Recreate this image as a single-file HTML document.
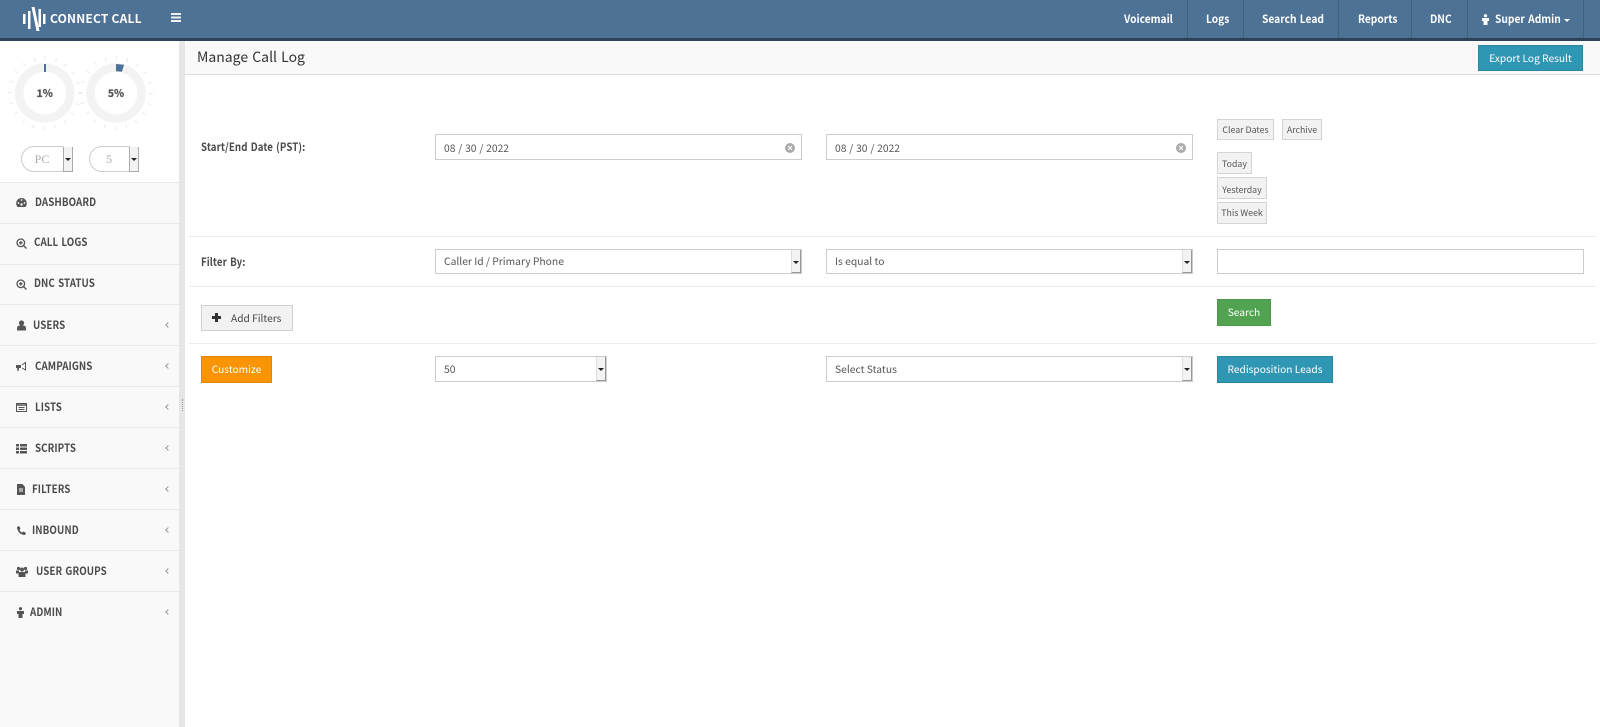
<!DOCTYPE html>
<html><head><meta charset="utf-8"><title>Manage Call Log</title>
<style>
*{box-sizing:border-box}
html,body{margin:0;padding:0;width:1600px;height:727px;overflow:hidden;background:#fff;font-family:"Noto Sans CJK SC","Liberation Sans",sans-serif;color:#444;font-size:11px}
.a{position:absolute;white-space:nowrap}
.hdr{left:0;top:0;width:1600px;height:41px;background:#4d7296;border-bottom:3px solid #2b4257}
.sep{top:0;width:1px;height:38px;background:#3f607f}
.nav{top:12px;color:#fff;font-weight:bold;font-size:11px;line-height:14px;word-spacing:1px;transform:scaleX(.93);transform-origin:0 0}
.side{left:0;top:41px;width:179px;height:686px;background:#fff}
.menu{left:0;top:182px;width:179px;height:545px;background:#f9f9f9;border-top:1px solid #e8e8e8}
.split{left:179px;top:41px;width:6px;height:686px;background:#e6e6e6}
.div{left:0;width:179px;height:1px;background:#e9e9e9}
.mi{font-weight:bold;font-size:11px;line-height:14px;color:#4a4a4a;letter-spacing:.1px;word-spacing:1px;transform:scaleX(.885);transform-origin:0 0}
.chev{left:166px;width:4px;height:4px;border-left:1px solid #999;border-bottom:1px solid #999;transform:rotate(45deg)}
.ico{left:16px;width:11px;height:11px}
.tb{left:185px;top:41px;width:1415px;height:34px;background:#f9f9f9;border-bottom:1px solid #ddd}
.ln{left:189px;width:1407px;height:1px;background:#ececec}
.lbl{font-weight:bold;font-size:11px;line-height:14px;color:#4a4a4a;letter-spacing:.1px;word-spacing:1px;transform:scaleX(.88);transform-origin:0 0}
.inp{border:1px solid #ccc;background:#fff;color:#555;font-size:10.300px;line-height:24px;padding-left:8px}
.ar{right:0;top:0;bottom:0;width:10px;background:#f3f3f3;border-left:1px solid #ddd;border-right:1px solid #999;border-bottom:1px solid #999}
.ar:after{content:"";position:absolute;left:1px;top:11px;border:3px solid transparent;border-top:3px solid #222;border-bottom:0;width:0;height:0}
.sb{background:#f2f2f2;border:1px solid #d4d4d4;color:#555;font-size:8.800px;line-height:20px;text-align:center}
.btn{color:#fff;font-size:10.200px;text-align:center}
.x{width:10px;height:10px;border-radius:50%;background:#aaa}
.x:after{content:"×";position:absolute;left:0;top:0;width:10px;text-align:center;color:#fff;font:bold 9px/10px "Liberation Sans",sans-serif}
.pill{border:1px solid #ccc;border-radius:14px;height:26px;background:#fff;font-family:"Liberation Serif",serif;font-size:12px;color:#aaa;line-height:24px;text-align:center}
.pa{top:147px;width:10px;height:25px;background:#f3f3f3;border:1px solid #aaa;border-top:0}
.pa:after{content:"";position:absolute;left:1px;top:11px;border:3px solid transparent;border-top:3px solid #222;border-bottom:0;width:0;height:0}
</style></head><body>
<div class="a hdr"></div>
<svg class="a" style="left:23px;top:7px" width="23" height="25" viewBox="0 0 23 25" fill="#fff"><rect x="0" y="7" width="2.500" height="10"/><rect x="5" y="4" width="2.500" height="18"/><path d="M8.500 0h3l5 24h-3z"/><rect x="15.500" y="2" width="2.500" height="18"/><rect x="20" y="7" width="2.500" height="10"/></svg>
<div class="a" style="left:50px;top:11px;color:#fff;font-weight:bold;font-size:12px;line-height:16px;letter-spacing:.2px">CONNECT CALL</div>
<svg class="a" style="left:171px;top:13px" width="10" height="9" fill="#f0f0f0"><rect width="10" height="2"/><rect y="3.500" width="10" height="2"/><rect y="7" width="10" height="2"/></svg>
<div class="a sep" style="left:1187px"></div><div class="a sep" style="left:1243px"></div><div class="a sep" style="left:1338px"></div><div class="a sep" style="left:1411px"></div><div class="a sep" style="left:1467px"></div><div class="a sep" style="left:1583px"></div>
<div class="a nav" style="left:1124px">Voicemail</div>
<div class="a nav" style="left:1206px">Logs</div>
<div class="a nav" style="left:1262px">Search Lead</div>
<div class="a nav" style="left:1358px">Reports</div>
<div class="a nav" style="left:1430px">DNC</div>
<svg class="a" style="left:1481px;top:14px" width="9" height="11" fill="#fff"><circle cx="4.500" cy="1.700" r="1.600"/><path d="M1 4h7v3H6.500v4h-4V7H1z"/></svg>
<div class="a nav" style="left:1495px">Super Admin</div>
<div class="a" style="left:1564px;top:19px;border:3px solid transparent;border-top:3px solid #fff;border-bottom:0"></div>

<div class="a side"></div>
<svg class="a" style="left:5px;top:55px" width="150" height="80">
<circle cx="39.700" cy="38" r="25.500" fill="none" stroke="#f3f3f3" stroke-width="8.500"/>
<circle cx="111" cy="38" r="25.500" fill="none" stroke="#f3f3f3" stroke-width="8.500"/>
<circle cx="39.700" cy="38" r="35" fill="none" stroke="#ececec" stroke-width="4" pathLength="240" stroke-dasharray="1.200 10.800"/>
<circle cx="111" cy="38" r="35" fill="none" stroke="#ececec" stroke-width="4" pathLength="240" stroke-dasharray="1.200 10.800"/>
<rect x="39" y="9" width="2" height="8" fill="#4d7296"/>
<path d="M111 9l8 .8-2 7-6-.5z" fill="#4d7296"/>
<text x="39.700" y="42" text-anchor="middle" font-family="Noto Sans CJK SC" font-weight="bold" font-size="10.500" fill="#555" stroke="#555" stroke-width=".25">1%</text>
<text x="111" y="42" text-anchor="middle" font-family="Noto Sans CJK SC" font-weight="bold" font-size="10.500" fill="#555" stroke="#555" stroke-width=".25">5%</text>
</svg>
<div class="a pill" style="left:21px;top:146px;width:52px;padding-right:10px">PC</div><div class="a pa" style="left:63px"></div>
<div class="a pill" style="left:89px;top:146px;width:50px;padding-right:10px">5</div><div class="a pa" style="left:129px"></div>

<div class="a menu"></div>
<div class="a div" style="top:223px"></div><div class="a div" style="top:264px"></div><div class="a div" style="top:304px"></div><div class="a div" style="top:345px"></div><div class="a div" style="top:386px"></div><div class="a div" style="top:427px"></div><div class="a div" style="top:468px"></div><div class="a div" style="top:509px"></div><div class="a div" style="top:550px"></div><div class="a div" style="top:591px"></div>
<div class="a split"></div>
<div class="a" style="left:182px;top:399px;width:1px;height:12px;border-left:1px dotted #999"></div>

<svg class="a ico" style="top:197px" viewBox="0 0 11 11" fill="#555"><path d="M5.500 1a5.300 5.300 0 0 0-5.300 5.300c0 1.500.5 2.700 1.300 3.700h8c.8-1 1.300-2.200 1.300-3.700A5.300 5.300 0 0 0 5.500 1z"/><circle cx="5.500" cy="3" r=".9" fill="#f9f9f9"/><circle cx="2.500" cy="6" r=".9" fill="#f9f9f9"/><circle cx="8.500" cy="6" r=".9" fill="#f9f9f9"/><circle cx="5.500" cy="7.500" r="1.200" fill="#f9f9f9"/></svg>
<div class="a mi" style="left:35px;top:195px">DASHBOARD</div>
<svg class="a ico" style="top:238px" viewBox="0 0 11 11" fill="none" stroke="#555" stroke-width="1.300"><circle cx="4.800" cy="4.800" r="3.800"/><path d="M7.500 7.500L10.500 10.500M3 4.800h3.600M4.800 3v3.600"/></svg>
<div class="a mi" style="left:34px;top:235px">CALL LOGS</div>
<svg class="a ico" style="top:279px" viewBox="0 0 11 11" fill="none" stroke="#555" stroke-width="1.300"><circle cx="4.800" cy="4.800" r="3.800"/><path d="M7.500 7.500L10.500 10.500M3 4.800h3.600M4.800 3v3.600"/></svg>
<div class="a mi" style="left:34px;top:276px">DNC STATUS</div>
<svg class="a ico" style="top:320px" viewBox="0 0 11 11" fill="#555"><circle cx="5.500" cy="3" r="2.600"/><path d="M1 10.500V8c0-1.500 1.500-2.500 2.500-2.500h4C8.500 5.500 10 6.500 10 8v2.500z"/></svg>
<div class="a mi" style="left:33px;top:318px">USERS</div>
<svg class="a ico" style="top:361px" viewBox="0 0 11 11" fill="#555"><path d="M0 4h5v3H3l-.5 3H1.500L1 7H0z"/><path d="M6 4l3.500-2.500V9L6 7" fill="none" stroke="#555"/></svg>
<div class="a mi" style="left:35px;top:359px">CAMPAIGNS</div>
<svg class="a ico" style="top:402px" viewBox="0 0 11 11" fill="none" stroke="#555"><rect x=".5" y="1.500" width="10" height="8"/><path d="M.5 3h10" stroke-width="1.500"/><path d="M2.500 5.500h6M2.500 7.500h6"/></svg>
<div class="a mi" style="left:35px;top:400px">LISTS</div>
<svg class="a ico" style="top:443px" viewBox="0 0 11 11" fill="#555"><rect y="1" width="3" height="2.500"/><rect x="4" y="1" width="7" height="2.500"/><rect y="4.500" width="3" height="2.500"/><rect x="4" y="4.500" width="7" height="2.500"/><rect y="8" width="3" height="2.500"/><rect x="4" y="8" width="7" height="2.500"/></svg>
<div class="a mi" style="left:35px;top:441px">SCRIPTS</div>
<svg class="a ico" style="top:484px" viewBox="0 0 11 11" fill="#555"><path d="M1 0h5.500L9 3v8H1z"/><path d="M3 5h4M3 7h4" stroke="#f9f9f9"/></svg>
<div class="a mi" style="left:32px;top:482px">FILTERS</div>
<svg class="a ico" style="top:525px" viewBox="0 0 11 11" fill="#555"><path d="M1 2l2-1 1.500 2.500L3.500 5c.5 1 1.500 2 2.500 2.500l1.500-1L10 8l-1 2c-4.500 0-8-3.500-8-8z"/></svg>
<div class="a mi" style="left:32px;top:523px">INBOUND</div>
<svg class="a" style="left:16px;top:566px" width="12" height="11" viewBox="0 0 12 11" fill="#555"><circle cx="2.500" cy="2.500" r="1.600"/><circle cx="9.500" cy="2.500" r="1.600"/><circle cx="6" cy="3.500" r="2"/><path d="M0 4.500h3v3H0zM9 4.500h3v3H9zM2.500 6h7v5h-7z"/></svg>
<div class="a mi" style="left:36px;top:564px">USER GROUPS</div>
<svg class="a" style="left:16px;top:607px" width="9" height="11" fill="#555"><circle cx="4.500" cy="1.700" r="1.600"/><path d="M1 4h7v3H6.500v4h-4V7H1z"/></svg>
<div class="a mi" style="left:30px;top:605px">ADMIN</div>
<div class="a chev" style="top:323px"></div><div class="a chev" style="top:364px"></div><div class="a chev" style="top:405px"></div><div class="a chev" style="top:446px"></div><div class="a chev" style="top:487px"></div><div class="a chev" style="top:528px"></div><div class="a chev" style="top:569px"></div><div class="a chev" style="top:610px"></div>

<div class="a tb"></div>
<div class="a" style="left:197px;top:48px;font-size:14px;line-height:18px;color:#333;word-spacing:1px">Manage Call Log</div>
<div class="a btn" style="left:1478px;top:45px;width:105px;height:26px;background:#2f96b4;border:1px solid #2a87a2;line-height:24px">Export Log Result</div>

<div class="a lbl" style="left:201px;top:140px">Start/End Date (PST):</div>
<div class="a inp" style="left:435px;top:134px;width:367px;height:26px;line-height:25px;word-spacing:.5px">08 / 30 / 2022</div>
<div class="a x" style="left:785px;top:143px"></div>
<div class="a inp" style="left:826px;top:134px;width:367px;height:26px;line-height:25px;word-spacing:.5px">08 / 30 / 2022</div>
<div class="a x" style="left:1176px;top:143px"></div>
<div class="a sb" style="left:1217px;top:119px;width:57px;height:21px">Clear Dates</div>
<div class="a sb" style="left:1282px;top:119px;width:40px;height:21px">Archive</div>
<div class="a sb" style="left:1217px;top:152px;width:35px;height:22px;line-height:22px">Today</div>
<div class="a sb" style="left:1217px;top:177px;width:50px;height:22px;line-height:23px">Yesterday</div>
<div class="a sb" style="left:1217px;top:202px;width:50px;height:22px">This Week</div>

<div class="a ln" style="top:236px"></div>
<div class="a lbl" style="left:201px;top:255px">Filter By:</div>
<div class="a inp" style="left:435px;top:249px;width:367px;height:25px;line-height:22px">Caller Id / Primary Phone<div class="a ar"></div></div>
<div class="a inp" style="left:826px;top:249px;width:367px;height:25px;line-height:22px">Is equal to<div class="a ar"></div></div>
<div class="a inp" style="left:1217px;top:249px;width:367px;height:25px"></div>
<div class="a ln" style="top:286px"></div>
<div class="a" style="left:201px;top:305px;width:92px;height:26px;background:#f2f2f2;border:1px solid #d0d0d0;font-size:10.200px;line-height:24px;color:#444;padding-left:29px">Add Filters<svg class="a" style="left:10px;top:7px" width="9" height="9" fill="#333"><path d="M3 0h3v3h3v3H6v3H3V6H0V3h3z"/></svg></div>
<div class="a btn" style="left:1217px;top:299px;width:54px;height:27px;background:#51a351;border:1px solid #4a964a;line-height:23px">Search</div>
<div class="a ln" style="top:343px"></div>
<div class="a btn" style="left:201px;top:356px;width:71px;height:27px;background:#f89406;border:1px solid #e08605;line-height:23px">Customize</div>
<div class="a inp" style="left:435px;top:356px;width:172px;height:26px">50<div class="a ar"></div></div>
<div class="a inp" style="left:826px;top:356px;width:367px;height:26px">Select Status<div class="a ar"></div></div>
<div class="a btn" style="left:1217px;top:356px;width:116px;height:27px;background:#2f96b4;border:1px solid #2a87a2;line-height:23px">Redisposition Leads</div>
</body></html>
